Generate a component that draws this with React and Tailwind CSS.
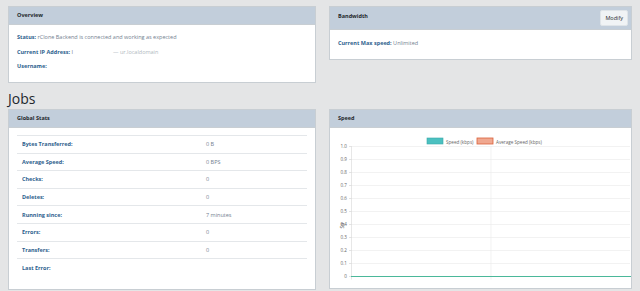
import React from "react";

const rows = [
  ["Bytes Transferred:", "0 B"],
  ["Average Speed:", "0 BPS"],
  ["Checks:", "0"],
  ["Deletes:", "0"],
  ["Running since:", "7 minutes"],
  ["Errors:", "0"],
  ["Transfers:", "0"],
  ["Last Error:", ""],
];

function Chart() {
  const labels = ["1.0", "0.9", "0.8", "0.7", "0.6", "0.5", "0.4", "0.3", "0.2", "0.1", "0"];
  const top = 18.5;
  const step = 13;
  return (
    <svg width="303" height="162" viewBox="0 0 303 162" className="block" style={{ fontFamily: "'Open Sans', sans-serif" }}>
      <rect x="97" y="10" width="16" height="6" fill="#4bc0c0" stroke="#3aa9a9" strokeWidth="0.6" />
      <text x="116" y="15.5" fontSize="4.6" fill="#666">Speed (kbps)</text>
      <rect x="147" y="10" width="16" height="6" fill="#f0a890" stroke="#d9603a" strokeWidth="0.8" />
      <text x="166" y="15.5" fontSize="4.6" fill="#666">Average Speed (kbps)</text>
      {labels.map((l, i) => (
        <g key={l}>
          <line x1="19" x2="300" y1={top + i * step} y2={top + i * step} stroke="#ececec" strokeWidth="0.7" />
          <line x1="19" x2="22" y1={top + i * step} y2={top + i * step} stroke="#ddd" strokeWidth="0.7" />
          <text x="17" y={top + i * step + 1.6} fontSize="4.6" fill="#666" textAnchor="end">{l}</text>
        </g>
      ))}
      <line x1="21.5" x2="21.5" y1={top} y2={top + 10 * step + 3} stroke="#ddd" strokeWidth="0.7" />
      <line x1="161" x2="161" y1={top} y2={top + 10 * step + 3} stroke="#ececec" strokeWidth="0.7" />
      <text x="0" y="0" fontSize="5" fill="#444" transform={`translate(14 ${top + 6 * step + 1}) rotate(-90)`} textAnchor="middle">Sp</text>
      <line x1="21" x2="301" y1={top + 10 * step} y2={top + 10 * step} stroke="#4bb89a" strokeWidth="1.2" />
    </svg>
  );
}

export default function App() {
  return (
    <div className="min-h-[291px] w-[640px] bg-[#e4e5e6] px-[8px] pt-[6px] text-[5.5px] text-[#73818f]" style={{ fontFamily: "'Open Sans', 'DejaVu Sans', sans-serif" }}>
      <div className="grid grid-cols-[308px_303px] items-start gap-x-[13px]">
        <div className="border border-[#c8ced3] bg-white">
          <div className="flex h-[18px] items-center border-b border-[#c8ced3] bg-[#c2cedb] px-[8px] font-bold text-[#23282c]">Overview</div>
          <div className="flex h-[57px] flex-col gap-[6px] px-[8px] pt-[8px] leading-[8.5px]">
            <div><span className="font-bold text-[#2e5f8e]">Status:</span> rClone Backend is connected and working as expected</div>
            <div><span className="font-bold text-[#2e5f8e]">Current IP Address:</span> I<span className="ml-[40px] text-[#b0b8c0]">— ur.localdomain</span></div>
            <div><span className="font-bold text-[#2e5f8e]">Username:</span></div>
          </div>
        </div>
        <div className="border border-[#c8ced3] bg-white">
          <div className="flex h-[23px] items-center justify-between border-b border-[#c8ced3] bg-[#c2cedb] pl-[8px] pr-[3px] font-bold text-[#23282c]">
            <span className="-mt-[4px]">Bandwidth</span>
            <button className="h-[16px] rounded-[2px] border border-[#dfe4e8] bg-[#f0f3f5] px-[4px] text-[5.5px] font-normal text-[#23282c]">Modify</button>
          </div>
          <div className="h-[29px] px-[8px] pt-[9px]">
            <span className="font-bold text-[#2e5f8e]">Current Max speed:</span> Unlimited
          </div>
        </div>
      </div>

      <h1 className="mt-[7px] mb-[1px] h-[18px] text-[14px] leading-[18px] font-normal text-[#23282c]" style={{ fontFamily: "'Open Sans', sans-serif" }}>Jobs</h1>

      <div className="grid grid-cols-[308px_303px] items-start gap-x-[13px]">
        <div className="h-[181px] border border-[#c8ced3] bg-white">
          <div className="flex h-[18px] items-center border-b border-[#c8ced3] bg-[#c2cedb] px-[8px] font-bold text-[#23282c]">Global Stats</div>
          <div className="px-[8px] pt-[7px]">
            <table className="w-full border-collapse">
              <tbody>
                {rows.map(([k, v]) => (
                  <tr key={k} className="h-[17.6px] border-t border-[#e4e7ea]">
                    <td className="w-[184px] p-0 pl-[5px] leading-[8px] font-bold text-[#2e5f8e]">{k}</td>
                    <td className="p-0 pl-[5px] leading-[8px]">{v}</td>
                  </tr>
                ))}
              </tbody>
            </table>
          </div>
        </div>
        <div className="h-[180px] border border-[#c8ced3] bg-white">
          <div className="flex h-[18px] items-center border-b border-[#c8ced3] bg-[#c2cedb] px-[8px] font-bold text-[#23282c]">Speed</div>
          <Chart />
        </div>
      </div>
    </div>
  );
}
